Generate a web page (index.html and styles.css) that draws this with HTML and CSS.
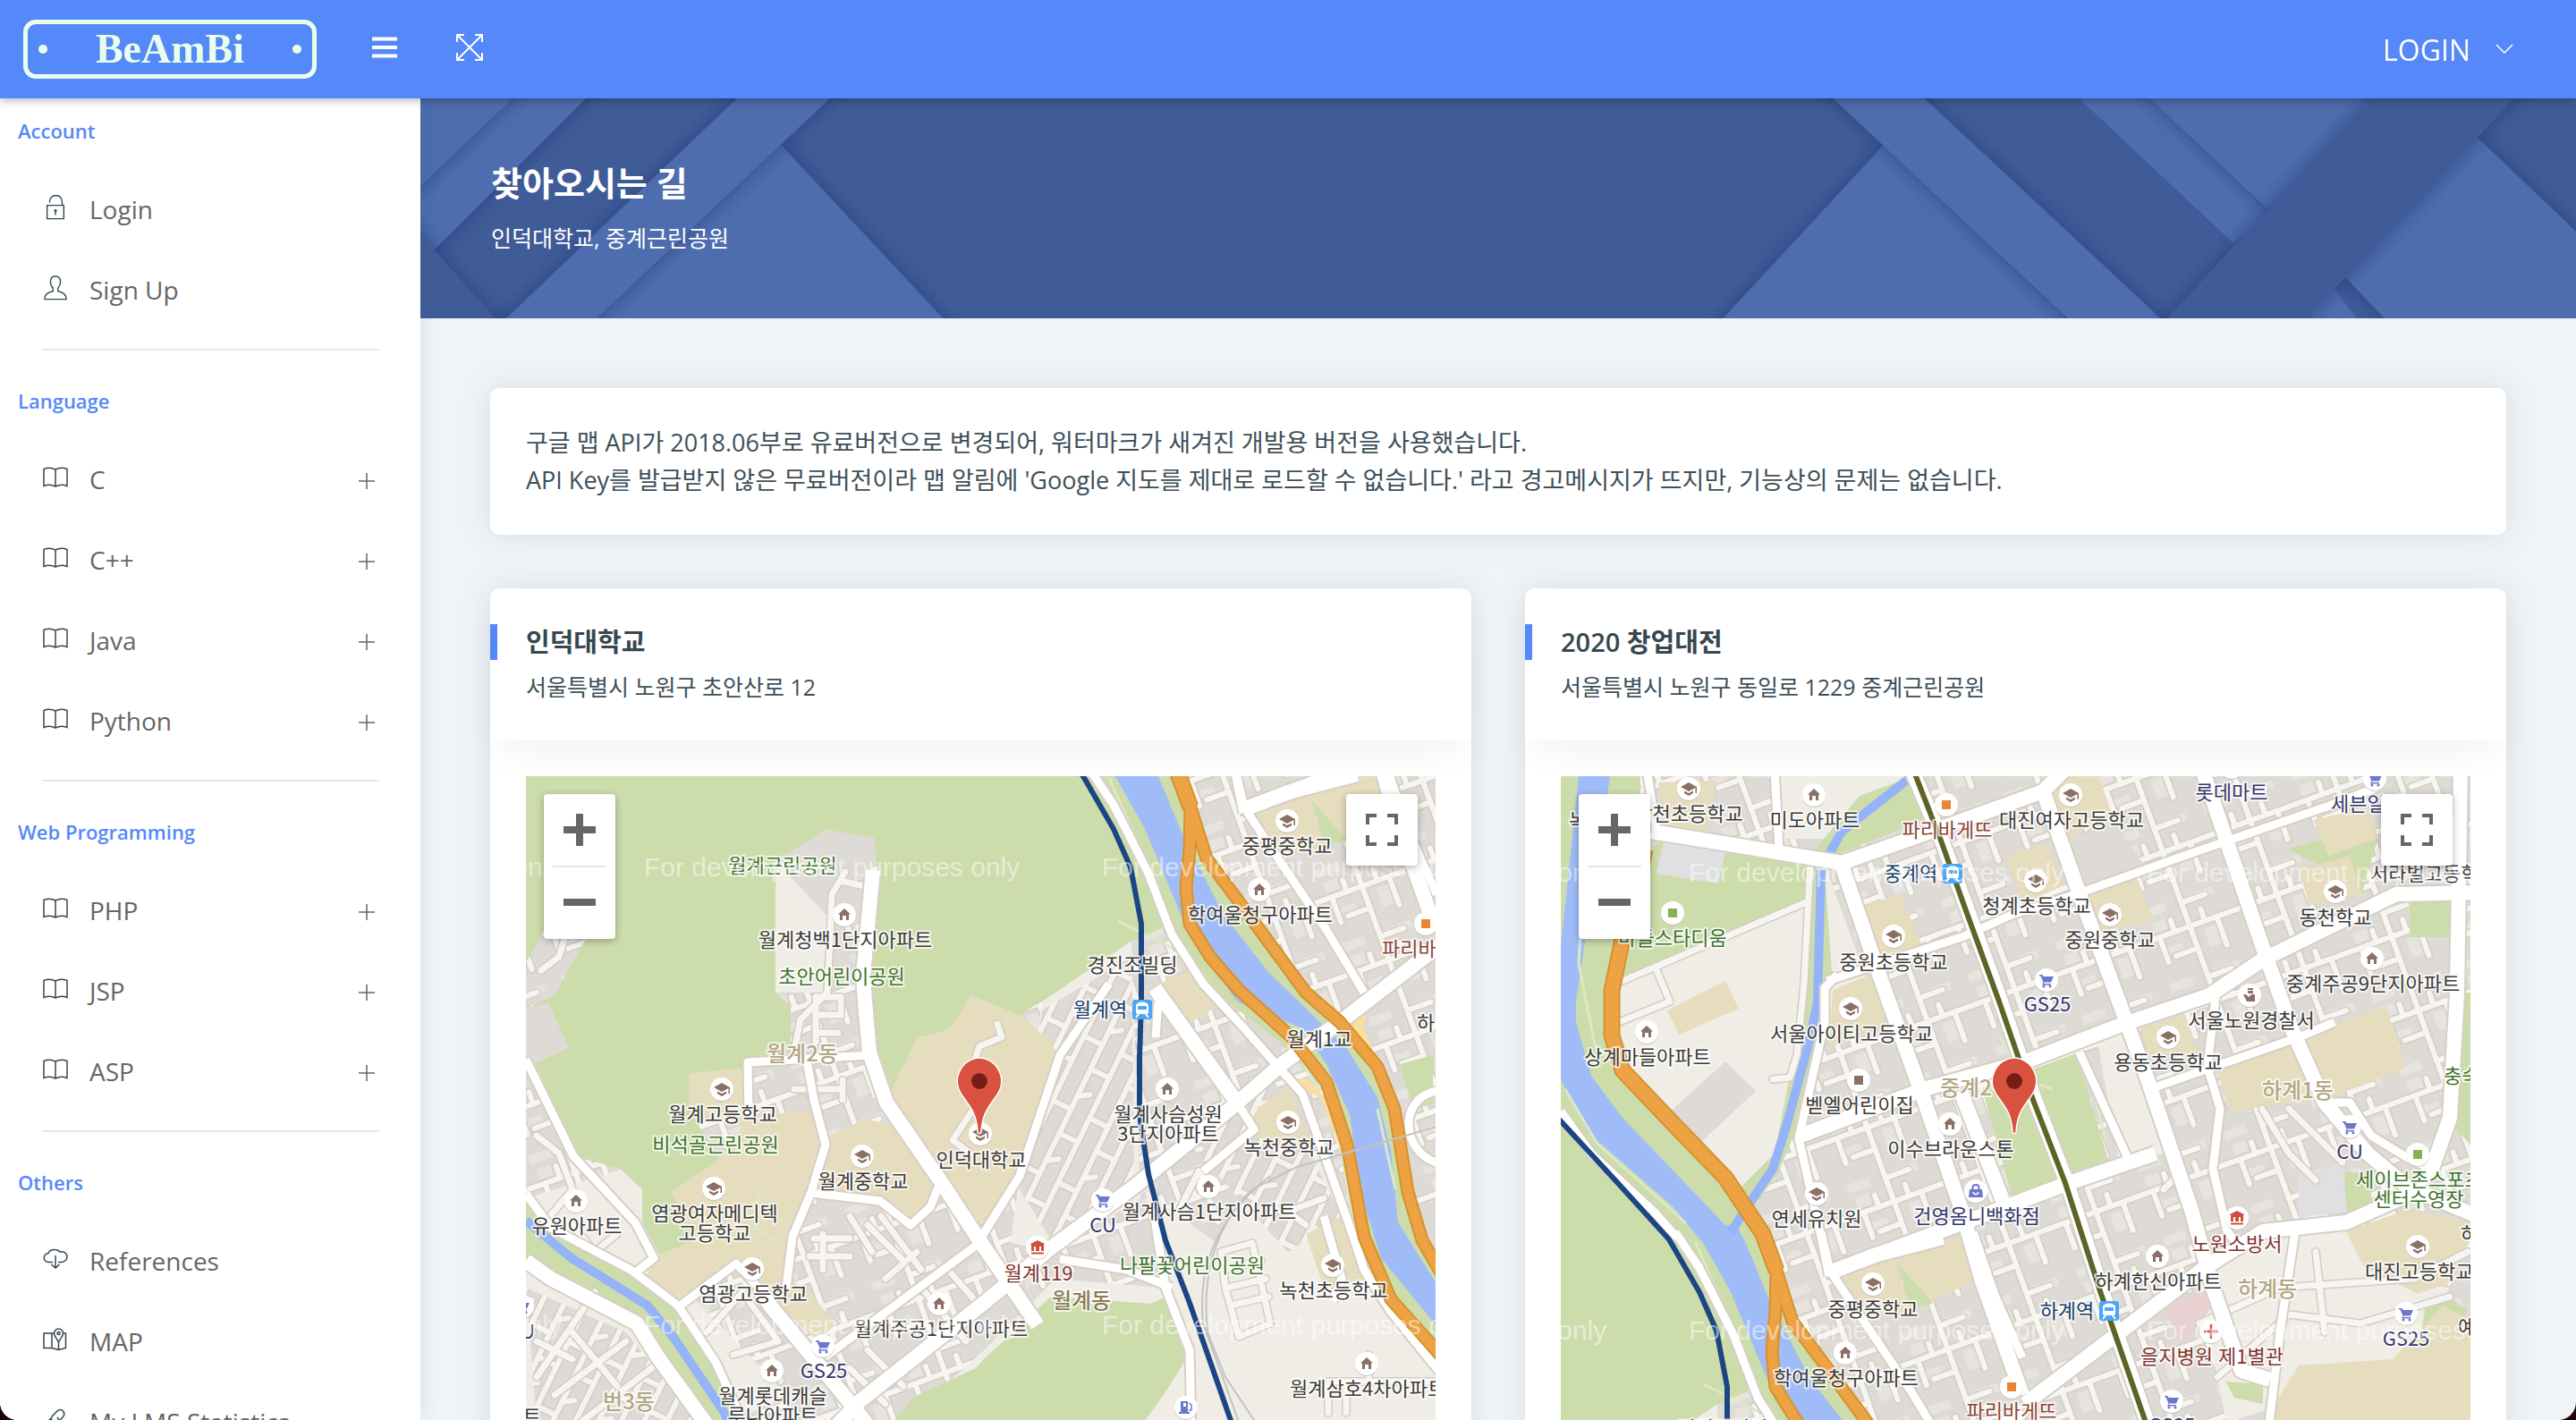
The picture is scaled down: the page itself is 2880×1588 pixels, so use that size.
FILE: index.html
```html
<!DOCTYPE html>
<html lang="ko">
<head>
<meta charset="utf-8">
<meta name="viewport" content="width=device-width, initial-scale=1">
<title>BeAmBi - 찾아오시는 길</title>
<link rel="stylesheet" href="styles.css">
</head>
<body>

<!-- shared symbols -->
<svg class="defs" aria-hidden="true">
  <defs>
    <symbol id="i-book" viewBox="0 0 28 24"><path d="M1 2.500C5 1 10 1 14 3c4-2 9-2 13-.5v19C23 20 18 20 14 22c-4-2-9-2-13-.5zM14 3v19"/></symbol>
    <symbol id="i-lock" viewBox="0 0 28 30"><path d="M4 12.500h20v16H4zM22 12V8a7 7 0 0 0-15 0v1"/><path d="M14 19v5"/><circle cx="14" cy="19" r="1"/></symbol>
    <symbol id="i-user" viewBox="0 0 28 30"><path d="M14 1c-4 0-6 3-6 6.500 0 3 1 5.500 3 7.500v4c-6 1-10 4-10 9.500h26c0-5.500-4-8.500-10-9.500v-4c2-2 3-4.500 3-7.500C20 4 18 1 14 1z"/></symbol>
    <symbol id="i-cloud" viewBox="0 0 28 24"><path d="M11 15.500H6.500a5 5 0 0 1-.5-10c1-2.500 4-4 7-4s5 1.200 6 2.500c5-1 8 2 8 5.500s-3 6-6.500 6H17M14 8v14M9.500 18l4.500 4 4.500-4"/></symbol>
    <symbol id="i-map" viewBox="0 0 28 26"><path d="M12.500 6H1v16.500h9V6M10 22.500l7.500 2 8-2V6H22M17.500 16v8.500M17.500 16c-2-4-5-6.500-5-10a5 5 0 0 1 10 0c0 3.500-3 6-5 10z"/><circle cx="17.500" cy="6" r="1.500"/></symbol>
    <symbol id="i-link" viewBox="0 0 28 28"><path d="M11 16c-2-2-2-5 0-7l5-5c2-2 5-2 6.500 0s1.500 5-.5 7l-4 4M16 11c2 2 2 5 0 7l-5 5c-2 2-5 2-6.500 0s-1.500-5 .5-7l4-4"/></symbol>
    <symbol id="i-plus" viewBox="0 0 18 18"><path d="M9 0v18M0 9h18"/></symbol>

    <g id="dot"><circle r="13" cy="1" fill="#b9b2aa" opacity=".7"/><circle r="13" fill="#fff"/></g>
    <g id="p-cap"><use href="#dot"/><path d="M-9-2L0-7l9 5v7H7.500v-6L0 3z" fill="#8a7065"/><path d="M-5 2.500L0 5l5-2.500V5L0 8l-5-3z" fill="#8a7065"/></g>
    <g id="p-home"><use href="#dot"/><path d="M0-7l7 6.500H5V6H2V1h-4v5h-3v-6.500h-2z" fill="#8a7065"/></g>
    <g id="p-cart"><use href="#dot"/><path d="M-8-6h3.500l1 2H8L5 2.500h-7.500L-3 4H5v1.500h-10l1.500-3-3-7H-8z" fill="#6b78c8"/><circle cx="-3" cy="7" r="1.500" fill="#6b78c8"/><circle cx="4" cy="7" r="1.500" fill="#6b78c8"/></g>
    <g id="p-train"><rect x="-11" y="-11" width="22" height="22" rx="3" fill="#4ba6f7"/><path d="M-7-4c0-6 14-6 14 0v7c0 1-1 2-2 2H-5c-1 0-2-1-2-2z" fill="#fff"/><path d="M-5-4H5v4H-5z" fill="#4ba6f7"/><path d="M-4 5l-3 4M4 5l3 4" stroke="#fff" stroke-width="2"/></g>
    <g id="p-food"><use href="#dot"/><path d="M-5-5H5V5H-5z" fill="#e88536"/></g>
    <g id="p-sport"><use href="#dot"/><path d="M-5-5H5V5H-5z" fill="#86b250"/></g>
    <g id="p-kids"><use href="#dot"/><path d="M-5-5H5V5H-5z" fill="#8a7065"/></g>
    <g id="p-fire"><use href="#dot"/><path d="M0-8l9 4.500H7V4H4V-1H2v5h-4v-5h-2v5h-3v-7.500h-2zM-7 5.500H7v2H-7z" fill="#cf4f3f"/></g>
    <g id="p-police"><use href="#dot"/><path d="M-2-8h6v2h-6zM-2-5h6v3h-6zM-7-1h3l3 3 3-3h4v8H-3z" fill="#8a7065"/></g>
    <g id="p-hosp"><use href="#dot"/><path d="M0-8V8M-8 0H8" stroke="#d7503f" stroke-width="2.500"/></g>
    <g id="p-bag"><use href="#dot"/><path d="M-7-2H7l1 9H-8z" fill="#6b78c8"/><path d="M-3.500-1v-3c0-4 7-4 7 0v3" fill="none" stroke="#6b78c8" stroke-width="2"/><path d="M-3 1c1 3.500 5 3.500 6 0" fill="none" stroke="#fff" stroke-width="1.500"/></g>
    <g id="p-gas"><use href="#dot"/><path d="M-6-7h8V5h2v2H-8V5h2z" fill="#6b78c8"/><path d="M-3-5h3v4h-3z" fill="#fff"/><path d="M3-5l3 2v6H3" fill="none" stroke="#6b78c8" stroke-width="1.500"/></g>
    <g id="pin"><path d="M-2 0C-3-20-10-28-18-39C-34-60-18-83 0-83S34-60 18-39C10-28 3-20 2 0C2 2-2 2-2 0z" fill="#d9513f" stroke="#fff" stroke-width="1.500"/><circle cy="-57" r="9" fill="#761d17"/></g>

    <pattern id="blocks" width="104" height="88" patternUnits="userSpaceOnUse" patternTransform="rotate(-20)">
      <path fill="#dedad5" d="M0 0h104v88H0z"/>
      <path fill="#e7e4df" d="M8 9h26v10H8zM12 26h16v12H12zM60 10h30v9H60zM66 52h14v22H66zM14 58h24v8H14z"/>
      <g fill="none" stroke-linecap="round" stroke="#d3ccc2" stroke-width="9"><path d="M0 44h104M52 0v88M16 44v30M34 44V30M52 70H26M52 16h28M84 44v34M70 44V30"/></g>
      <g fill="none" stroke-linecap="round" stroke="#f7f5f1" stroke-width="6"><path d="M0 44h104M52 0v88M16 44v30M34 44V30M52 70H26M52 16h28M84 44v34M70 44V30"/></g>
    </pattern>
    <pattern id="alleys" width="80" height="46" patternUnits="userSpaceOnUse" patternTransform="rotate(-64)">
      <path fill="#dedad5" d="M0 0h80v46H0z"/>
      <g fill="none" stroke-linecap="round" stroke="#d3ccc2" stroke-width="9"><path d="M0 10h80M0 33h80M20 10v23M50 33v13M50 0v10M66 10l8 12"/></g>
      <g fill="none" stroke-linecap="round" stroke="#f5f3ee" stroke-width="6"><path d="M0 10h80M0 33h80M20 10v23M50 33v13M50 0v10M66 10l8 12"/></g>
    </pattern>

    <g id="wide">
      <path d="M976 973L965 1090 967 1120 972 1177 991 1233 1053 1323 1095 1387 1160 1482"/>
      <path d="M930 1600L961 1567 1100 1457 1173 1397 1268 1327 1379 1237 1433 1190 1502 1140 1606 1060"/>
      <path d="M588 1410L616 1430 712 1480 735 1517 795 1600"/>
      <path d="M848 1440L861 1460 949 1567 975 1600"/>
      <path d="M1291 1105L1383 1233"/>
      <path d="M1391 905L1440 886 1517 866"/>
      <g transform="translate(-656 -518)">
        <path d="M1847 930L1940 945 2060 965 2174 925 2285 885 2310 860"/>
        <path d="M2060 967L2102 1090 2151 1227 2194 1353 2217 1433 2262 1560"/>
        <path d="M2286 887L2326 1000 2370 1120 2403 1210 2451 1353 2475 1440 2507 1533 2539 1543"/>
        <path d="M2463 860L2531 1060 2563 1150 2600 1233 2648 1290 2692 1327 2775 1362"/>
        <path d="M2014 1270L2155 1217 2266 1187 2370 1147 2471 1113 2531 1073 2680 1000 2770 998"/>
        <path d="M2046 1423L2197 1367 2314 1323 2411 1290"/>
        <path d="M2265 1570L2467 1417 2531 1377 2624 1367 2692 1337 2720 1307 2740 1250 2748 1110 2752 860"/>
        <path d="M2138 860L2172 940 2199 1013 2238 1120 2276 1230 2312 1323 2352 1447 2405 1600"/>
        <path d="M2194 1223L2243 1350"/>
      </g>
    </g>
    <g id="mid">
      <path d="M588 1185L641 1293 710 1367 731 1407 708 1425"/>
      <path d="M588 1335L616 1373 705 1420 758 1460 800 1523 835 1600"/>
      <path d="M758 1462L823 1413 848 1440"/>
      <path d="M837 1247L836 1188 972 1180M902 1186L910 1230 923 1280 907 1333 886 1383 879 1440"/>
      <path d="M907 1334L984 1343 1018 1370 1040 1350 1050 1325M923 1517L1095 1390M1095 1387L1140 1315 1155 1270 1185 1180 1240 1100"/>
      <path d="M1218 860L1245 900 1284 977 1310 1045 1345 1100 1391 1150 1429 1193 1456 1223 1479 1287 1513 1383 1525 1420 1555 1467 1610 1535"/>
      <path d="M1383 1233L1402 1263 1345 1310M1295 1120L1292 1160M1289 1350L1303 1440 1330 1510 1332 1600M1185 1408L1260 1420 1310 1440"/>
      <path d="M1381 860L1391 903 1429 960 1483 1040 1525 1110M1551 860L1575 930 1606 1000M1480 1360L1500 1430 1490 1455"/>
      <path d="M1606 1300C1570 1290 1560 1230 1606 1220"/>
      <g transform="translate(-656 -518)">
        <path d="M2044 1097L2197 1047 2250 1023 2322 1000 2443 957 2608 900 2660 880"/>
        <path d="M2407 1217L2571 1160 2611 1143M2608 1233L2628 1233 2652 1270 2696 1297 2720 1307"/>
        <path d="M2567 1377L2551 1483 2537 1600M2479 1107L2469 1193 2483 1240 2475 1307 2491 1377 2510 1400"/>
        <path d="M2055 1090L2041 1105 2041 1143 2012 1273 2037 1383 2046 1427M2326 1177L2379 1293"/>
        <path d="M1842 860L1853 930M1985 860L1990 950M1746 1243L1780 1290 1850 1355 1876 1384"/>
      </g>
    </g>
    <g id="small">
      <path d="M945 975L930 1000 928 1050 925 1110 895 1140 888 1175M940 985L970 992M912 1115L940 1115 940 1135 912 1135zM912 1120V1165M912 1155h25"/>
      <path d="M888 1218h54M942 1208v22M1115 1145L1120 1160 1095 1170 1080 1215 1095 1230 1065 1275 1085 1290"/>
      <path d="M910 1385h40M905 1405h45M920 1380v40M950 1360L975 1400M970 1370L1010 1410M985 1360L1030 1420M990 1430L1025 1400"/>
      <path d="M605 1085L625 1070 640 1020M600 1540L665 1445M620 1560L700 1500M650 1590L735 1525M640 1490L690 1550M600 1500L640 1520"/>
      <path d="M790 1490L830 1445 870 1500 820 1515M640 1370L665 1400 690 1380M600 1270L625 1290 640 1330 615 1360"/>
      <path d="M1030 1440L1080 1500M1060 1420L1095 1460M950 1530L990 1570M970 1510L1010 1550"/>
      <path d="M1370 1440L1365 1400 1400 1390 1420 1480 1385 1495zM1370 1420L1410 1410M1372 1440L1415 1430M1376 1460L1418 1450"/>
      <path d="M1485 1580V1545h120M1530 1545v-30M1460 1370L1440 1355 1480 1340M1320 1350L1340 1310 1350 1325M1505 1580v-35"/>
      <g transform="translate(-656 -518)">
        <path d="M1815 1097L2018 1010M1853 1085L1868 1120 1811 1143M2025 963L2018 1100 2010 1180 2002 1205 1983 1207"/>
        <path d="M2420 1330L2440 1310 2460 1380M2530 1240L2560 1290 2590 1320M2560 1240L2620 1300M2460 1480L2550 1440 2700 1430 2760 1400M2480 1540L2560 1470 2640 1480 2740 1450M2590 1400L2600 1490"/>
      </g>
    </g>
    <g id="express">
      <path d="M1316 868L1331 903 1330 950 1326 993 1330 1033 1353 1070 1385 1107 1444 1160 1483 1210 1506 1280 1525 1383 1555 1453 1612 1517"/>
      <path d="M1331 903L1349 960 1379 1000 1421 1057 1460 1110 1498 1143 1540 1193 1559 1240 1574 1333 1590 1387 1612 1425"/>
    </g>
    <path id="trunk" d="M1184 432L1174 482 1159 532 1147 590 1147 640 1159 679 1216 739 1274 799 1316 862 1331 903"/>

    <!-- base cartography; both maps are windows on the same ground -->
    <g id="world">
      <path fill="url(#blocks)" d="M560 330h1580v1320H560z"/>
      <g class="land">
        <path d="M588 1340L720 1300 745 1420 880 1560 800 1600H588zM1000 1600L1100 1510 1180 1430 1300 1440 1280 1330 1360 1390 1400 1320 1480 1290 1520 1400 1606 1520V1600zM867 963L930 1020 925 1110 867 1110zM1165 1120L1265 1052 1275 1340 1180 1400 1130 1390z"/>
        <g transform="translate(-656 -518)"><path d="M1810 1100L2018 1010 2044 975 2090 1100 2020 1190 1985 1290 1960 1345 1800 1190zM2345 1160L2385 1140 2420 1290 2370 1300zM2490 1390L2570 1375 2640 1375 2660 1430 2740 1440 2670 1540 2490 1590 2460 1440zM1985 868h150l-60 70-90 0z"/></g>
      </g>
      <path fill="url(#alleys)" d="M1165 1130L1265 1070 1268 1320 1180 1395 1140 1330zM588 1440L700 1490 780 1588H600zM1420 1200L1500 1360 1440 1400 1330 1280z"/>
      <g class="green">
        <path d="M588 740H1218L1299 1023 1299 1038 1264 1053 1165 1120 1140 1135 1085 1113 1064 1148 1049 1155 1026 1160 995 1223 978 1180 970 1100 982 980 977 937 924 928 867 963V1110L884 1125V1177L836 1182 830 1200 770 1200V1240L804 1297 760 1360 777 1387 737 1403 718 1367V1330L693 1307 649 1295 588 1170V1128L620 1113 655 1050 609 1040 588 1077z"/>
        <path d="M1100 1520L1175 1450 1287 1458 1303 1450 1326 1520 1303 1557 1272 1600H990L1022 1562 1091 1530z"/>
        <path d="M588 1335L616 1375 705 1420 758 1460 800 1523 835 1600H790L735 1517 712 1480 616 1430 588 1410z"/>
        <path d="M1225 868L1310 1050 1360 1110 1430 1165 1490 1230 1510 1350 1530 1430 1606 1505V1410L1570 1330 1555 1230 1500 1150 1450 1100 1350 975 1316 868z"/>
        <path d="M1464 884L1490 877 1506 940 1480 945zM1565 1190L1602 1180V1235L1580 1240z"/>
        <g transform="translate(-656 -518)">
          <path d="M1746 868H1835L1830 1000 1812 1060 1805 1190 1870 1260 1976 1386H1880L1746 1240zM1847 950L1860 938 2035 972 2018 1010 1815 1097zM2217 1217L2322 1178 2358 1297 2251 1340z"/>
          <path d="M2140 868L2155 915 2040 962 2050 1100 2010 1260 1990 1310 1940 1380 1925 1350 1985 1290 2018 1120 2030 950 2080 890z"/>
          <path d="M2559 950L2591 940 2660 935 2642 998 2600 970zM2695 998L2742 1000 2741 1048H2695zM2489 1545L2531 1548V1570L2499 1563zM2712 1463L2736 1450 2760 1465 2700 1550zM2622 1310L2652 1313V1347L2624 1355zM2750 1110H2780V1300L2745 1260z"/>
        </g>
      </g>
      <path class="urban" d="M867 963L924 928 977 937 968 1030 930 1030zM588 1128L613 1121 636 1172 597 1190 588 1180z"/>
      <g class="school">
        <path d="M770 1200L830 1195V1252L905 1240 916 1283 900 1333 878 1430 900 1440 935 1480 915 1500 861 1450 823 1413 758 1453 722 1427 737 1403 777 1387 750 1333 804 1297 830 1260 770 1240z"/>
        <path d="M925 1272L967 1251 1003 1260 1050 1330 1018 1368 984 1340 910 1330zM1085 1113L1140 1135 1175 1165 1187 1190 1138 1317 1098 1370 1053 1320 995 1225 1026 1160 1049 1155 1064 1148z"/>
        <path d="M1398 910L1462 885 1482 950 1430 955zM1297 1100L1340 1080 1370 1120 1320 1150zM1405 1240L1440 1215 1470 1290 1400 1270zM1460 1380L1500 1360 1530 1430 1480 1440z"/>
        <g transform="translate(-656 -518)">
          <path d="M1855 875L1920 873 1908 930 1863 923zM1865 1130L1930 1097 1945 1128 1878 1157zM2083 1013L2125 1000 2150 1057 2098 1070zM2050 1107L2092 1090 2111 1147 2046 1172zM2288 887L2302 868H2348L2360 907 2308 945zM2243 957L2290 943 2308 990 2262 1012zM2326 1000L2391 983 2409 1030 2342 1043z"/>
          <path d="M2587 917L2648 903 2660 937 2604 957zM2571 973L2628 957 2642 1000 2583 1013zM2479 1197L2563 1163 2590 1230 2495 1242zM2571 1160L2668 1125 2692 1193 2600 1230zM2393 1150L2443 1133 2459 1177 2403 1180zM2624 1377L2692 1353 2770 1367 2744 1433 2704 1447 2644 1417zM2571 1527L2676 1520 2732 1460 2770 1480V1600H2546V1567zM2118 1408L2146 1395 2200 1382 2213 1430 2160 1455z"/>
        </g>
      </g>
      <g transform="translate(-656 -518)">
        <path class="urban" d="M1930 1187L1964 1220 1903 1277 1868 1243zM2308 945L2365 920 2400 970 2325 995z"/>
        <path fill="#e0e0e2" d="M1861 942L1930 953 1922 988 1853 977zM2571 1313L2620 1300 2624 1355 2571 1362z"/>
        <path fill="#e8d1d0" d="M2421 1463L2467 1443 2473 1463 2440 1505z"/>
      </g>
      <g class="water">
        <path d="M1247 868L1280 927 1326 1037 1383 1120 1456 1150 1483 1190 1509 1247 1521 1333 1544 1407 1612 1490V1445L1563 1367 1555 1287 1540 1227 1506 1173 1452 1120 1418 1087 1368 1023 1322 933 1295 868z"/>
        <path d="M1110 350H1145L1107 602V625L1124 685 1159 732 1274 852 1287 852 1295 870H1247L1216 832 1121 749 1090 689V540z"/>
      </g>
      <path class="creek" d="M588 1365L639 1407 724 1460 754 1497 808 1577 820 1600"/>
      <path class="creek" d="M1480 352L1438 385 1404 412 1390 437M1381 455L1377 602 1369 642 1342 742 1327 789 1300 829 1280 860"/>
      <path class="trail" d="M1240 870L1275 950 1300 1030M1095 700L1130 760 1230 850M1120 400L1110 560 1128 650 1200 730M1540 1240L1560 1330M1450 1175L1495 1260 1515 1380M760 1290L800 1290M830 1270L810 1290M850 1330L840 1370 870 1390M1580 640L1610 690 1640 700M1680 680L1700 760M1250 1030L1310 1060"/>
      <path class="ramp" d="M1500 1130L1512 1128 1530 1112 1524 1150 1540 1185 1520 1170zM1430 1195L1440 1165 1460 1185zM1440 1205L1462 1207 1490 1240 1500 1290 1478 1230z"/>
      <g class="line round"><use href="#small" class="case-s"/><use href="#small" class="fill-s"/></g>
      <g class="line"><use href="#mid" class="case-m"/><use href="#wide" class="case-w"/><use href="#mid" class="fill-m"/><use href="#wide" class="fill-w"/></g>
      <g class="line"><use href="#express" class="case-x"/><use href="#trunk" class="case-t"/><use href="#express" class="fill-x"/><use href="#trunk" class="fill-t"/></g>
      <path class="rail" d="M1606 1260L1520 1285 1450 1305 1400 1330C1350 1380 1345 1440 1350 1490L1370 1540 1410 1600M1420 1315C1350 1370 1340 1430 1345 1480L1385 1590"/>
      <path class="line1" d="M1080 725L1151 802 1211 868 1245 927 1264 970 1276 1033 1276 1120 1274 1183 1274 1247 1284 1313 1303 1387 1330 1457 1380 1600"/>
      <path class="line7" d="M1483 340L1515 422 1541 495 1580 602 1618 712 1654 805 1694 929 1750 1090"/>
    </g>
  </defs>
</svg>

<div class="app">
  <header class="topbar">
    <a class="logo" href="#"><i class="peg"></i><span>BeAmBi</span><i class="peg"></i></a>
    <button class="tool" type="button" aria-label="메뉴"><svg width="28" height="24" viewBox="0 0 28 24"><path d="M0 2.500h28M0 12h28M0 21.500h28" stroke="#fff" stroke-width="4"/></svg></button>
    <button class="tool" type="button" aria-label="전체 화면"><svg width="30" height="30" viewBox="0 0 30 30"><path d="M2 2l26 26M28 2L2 28M1 9V1h8M21 1h8v8M29 21v8h-8M9 29H1v-8" fill="none" stroke="#fff" stroke-width="2"/></svg></button>
    <button class="login" type="button">LOGIN<svg width="20" height="12" viewBox="0 0 20 12"><path d="M1 1l9 9 9-9" fill="none" stroke="#fff" stroke-width="1.500"/></svg></button>
  </header>

  <div class="shell">
    <nav class="sidebar">
      <h2>Account</h2>
      <a href="#"><svg><use href="#i-lock"/></svg><span>Login</span></a>
      <a href="#"><svg><use href="#i-user"/></svg><span>Sign Up</span></a>
      <hr>
      <h2>Language</h2>
      <a href="#"><svg><use href="#i-book"/></svg><span>C</span><svg class="plus"><use href="#i-plus"/></svg></a>
      <a href="#"><svg><use href="#i-book"/></svg><span>C++</span><svg class="plus"><use href="#i-plus"/></svg></a>
      <a href="#"><svg><use href="#i-book"/></svg><span>Java</span><svg class="plus"><use href="#i-plus"/></svg></a>
      <a href="#"><svg><use href="#i-book"/></svg><span>Python</span><svg class="plus"><use href="#i-plus"/></svg></a>
      <hr>
      <h2>Web Programming</h2>
      <a href="#"><svg><use href="#i-book"/></svg><span>PHP</span><svg class="plus"><use href="#i-plus"/></svg></a>
      <a href="#"><svg><use href="#i-book"/></svg><span>JSP</span><svg class="plus"><use href="#i-plus"/></svg></a>
      <a href="#"><svg><use href="#i-book"/></svg><span>ASP</span><svg class="plus"><use href="#i-plus"/></svg></a>
      <hr>
      <h2>Others</h2>
      <a href="#"><svg><use href="#i-cloud"/></svg><span>References</span></a>
      <a href="#"><svg><use href="#i-map"/></svg><span>MAP</span></a>
      <a href="#"><svg><use href="#i-link"/></svg><span>My LMS Statistics</span></a>
    </nav>

    <main class="content">
      <section class="banner">
        <svg class="banner-art" viewBox="0 0 2410 246" preserveAspectRatio="xMidYMid slice" aria-hidden="true">
          <defs><filter id="soft" x="-20%" y="-20%" width="140%" height="140%"><feDropShadow dx="0" dy="0" stdDeviation="9" flood-color="#1d2f6b" flood-opacity=".6"/></filter></defs>
          <path fill="#3f5c98" d="M0 0h2410v246H0z"/>
          <g filter="url(#soft)" fill="#4e6dae"><path d="M100-20H205L-20 205V100z"/></g>
          <g filter="url(#soft)" fill="#4e6dae"><path d="M-20-20H124L-20 117z"/></g>
          <g filter="url(#soft)" fill="#3f5c98"><path d="M-20 130L102 266H-20z"/></g>
          <g filter="url(#soft)" fill="#4e6dae"><path d="M403 52L603 266H176z"/></g>
          <g filter="url(#soft)" fill="#4e6dae"><path d="M375-20H479L176 266H75z"/></g>
          <g filter="url(#soft)" fill="#4e6dae"><path d="M1636 52L1862 266H1438z"/></g>
          <g filter="url(#soft)" fill="#4e6dae"><path d="M1558-20H1660L1967 266H1863z"/></g>
          <path fill="#4e6dae" d="M1833-20H1930L2090 110 2027 162z"/>
          <g filter="url(#soft)" fill="#4e6dae"><path d="M1912-20H2200L2069 127z"/></g>
          <path fill="#4e6dae" d="M2136 208L2180 266H2080z"/>
          <g filter="url(#soft)" fill="#4e6dae"><path d="M2298 42L2430 168V266H2215L2150 198z"/></g>
          <g filter="url(#soft)" fill="#3f5c98"><path d="M2200-20H2360L2090 266H1934z"/></g>
        </svg>
        <h1>찾아오시는 길</h1>
        <p>인덕대학교, 중계근린공원</p>
      </section>

      <div class="page">
        <section class="card notice">
          <p>구글 맵 API가 2018.06부로 유료버전으로 변경되어, 워터마크가 새겨진 개발용 버전을 사용했습니다.</p>
          <p>API Key를 발급받지 않은 무료버전이라 맵 알림에 'Google 지도를 제대로 로드할 수 없습니다.' 라고 경고메시지가 뜨지만, 기능상의 문제는 없습니다.</p>
        </section>

        <div class="columns">
          <section class="card">
            <header class="card-head"><h3>인덕대학교</h3><p>서울특별시 노원구 초안산로 12</p></header>
            <div class="map">
              <svg class="ground" viewBox="588 868 1018 800" preserveAspectRatio="xMinYMin slice">
                <use href="#world"/>
                <g>
                  <use href="#p-home" x="944" y="1023"/><use href="#p-cap" x="1439" y="918"/><use href="#p-home" x="1408" y="995"/><use href="#p-food" x="1594" y="1033"/>
                  <use href="#p-cap" x="807" y="1218"/><use href="#p-cap" x="798" y="1329"/><use href="#p-cap" x="964" y="1293"/><use href="#p-cap" x="1096" y="1268"/>
                  <use href="#p-home" x="644" y="1343"/><use href="#p-cap" x="841" y="1419"/><use href="#p-home" x="1050" y="1458"/><use href="#p-cart" x="920" y="1505"/>
                  <use href="#p-home" x="863" y="1533"/><use href="#p-cart" x="584" y="1461"/><use href="#p-train" x="1277" y="1129"/><use href="#p-home" x="1305" y="1218"/>
                  <use href="#p-cap" x="1440" y="1255"/><use href="#p-home" x="1351" y="1327"/><use href="#p-cart" x="1233" y="1342"/><use href="#p-fire" x="1160" y="1395"/>
                  <use href="#p-cap" x="1490" y="1415"/><use href="#p-home" x="1528" y="1525"/><use href="#p-gas" x="1326" y="1574"/>
                </g>
                <g class="labels">
                  <text class="park" x="875" y="976">월계근린공원</text><text x="945" y="1059">월계청백1단지아파트</text><text class="park" x="941" y="1100">초안어린이공원</text>
                  <text x="1439" y="954">중평중학교</text><text x="1409" y="1031">학여울청구아파트</text><text class="food from" x="1545" y="1069">파리바게뜨</text><text x="1266" y="1087">경진조빌딩</text>
                  <text class="dong" x="897" y="1187">월계2동</text><text x="808" y="1254">월계고등학교</text><text class="park" x="800" y="1288">비석골근린공원</text>
                  <text x="799" y="1365">염광여자메디텍</text><text x="799" y="1387">고등학교</text><text x="965" y="1329">월계중학교</text><text x="1097" y="1305">인덕대학교</text>
                  <text x="645" y="1379">유원아파트</text><text x="842" y="1455">염광고등학교</text><text x="1052" y="1494">월계주공1단지아파트</text><text class="shop" x="921" y="1541">GS25</text>
                  <text x="864" y="1569">월계롯데캐슬</text><text x="864" y="1591">루나아파트</text><text class="dong" x="703" y="1576">번3동</text><text class="shop" x="583" y="1497">CU</text><text class="to" x="605" y="1592">아파트</text>
                  <text class="metro" x="1230" y="1137">월계역</text><text x="1475" y="1170">월계1교</text><text class="from" x="1584" y="1152">하계</text>
                  <text x="1306" y="1254">월계사슴성원</text><text x="1306" y="1276">3단지아파트</text><text x="1441" y="1291">녹천중학교</text><text x="1352" y="1363">월계사슴1단지아파트</text>
                  <text class="shop" x="1233" y="1378">CU</text><text class="civic" x="1161" y="1432">월계119</text><text class="dong dark" x="1209" y="1463">월계동</text><text class="park" x="1333" y="1423">나팔꽃어린이공원</text>
                  <text x="1491" y="1451">녹천초등학교</text><text class="from" x="1442" y="1561">월계삼호4차아파트</text>
                </g>
                <g class="mark">
                  <text x="208" y="980">For development purposes only</text><text x="720" y="980">For development purposes only</text><text x="1232" y="980">For development purposes only</text>
                  <text x="208" y="1492">For development purposes only</text><text x="720" y="1492">For development purposes only</text><text x="1232" y="1492">For development purposes only</text>
                </g>
                <use href="#pin" x="1095" y="1266"/>
              </svg>
              <div class="zoom"><button type="button" aria-label="확대"><svg viewBox="0 0 36 36"><path d="M0 14h14V0h8v14h14v8H22v14h-8V22H0z"/></svg></button><button type="button" aria-label="축소"><svg viewBox="0 0 36 36"><path d="M0 14h36v8H0z"/></svg></button></div>
              <button class="full" type="button" aria-label="전체 화면 보기"><svg viewBox="0 0 36 36"><path d="M0 0h12v4H4v8H0zM24 0h12v12h-4V4h-8zM0 24h4v8h8v4H0zM32 24h4v12H24v-4h8z"/></svg></button>
            </div>
          </section>

          <section class="card">
            <header class="card-head"><h3>2020 창업대전</h3><p>서울특별시 노원구 동일로 1229 중계근린공원</p></header>
            <div class="map">
              <svg class="ground" viewBox="1746 868 1018 800" preserveAspectRatio="xMinYMin slice">
                <g transform="translate(656 518)"><use href="#world"/></g>
                <g>
                  <use href="#p-cap" x="1889" y="882"/><use href="#p-home" x="2029" y="889"/><use href="#p-food" x="2177" y="900"/><use href="#p-cap" x="2316" y="889"/><use href="#dot" x="2496" y="858"/>
                  <use href="#p-cart" x="2656" y="871"/><use href="#p-train" x="2184" y="977"/><use href="#p-cap" x="2277" y="985"/><use href="#p-cap" x="2360" y="1023"/><use href="#p-cap" x="2612" y="997"/>
                  <use href="#p-sport" x="1871" y="1021"/><use href="#p-cap" x="2118" y="1047"/><use href="#p-cart" x="2289" y="1096"/><use href="#p-home" x="2653" y="1072"/><use href="#p-police" x="2516" y="1113"/>
                  <use href="#p-cap" x="2070" y="1128"/><use href="#p-home" x="1842" y="1154"/><use href="#p-kids" x="2079" y="1208"/><use href="#p-home" x="2181" y="1257"/><use href="#p-bag" x="2210" y="1332"/>
                  <use href="#p-cap" x="2032" y="1335"/><use href="#p-cap" x="2095" y="1436"/><use href="#p-home" x="2064" y="1513"/><use href="#p-food" x="2250" y="1551"/><use href="#p-train" x="2359" y="1466"/>
                  <use href="#p-home" x="2413" y="1405"/><use href="#p-cap" x="2425" y="1160"/><use href="#p-cart" x="2628" y="1260"/><use href="#p-sport" x="2704" y="1291"/><use href="#p-fire" x="2502" y="1362"/>
                  <use href="#p-cap" x="2704" y="1394"/><use href="#p-hosp" x="2473" y="1489"/><use href="#p-cart" x="2691" y="1469"/><use href="#p-cart" x="2429" y="1567"/>
                </g>
                <g class="labels">
                  <text class="from" x="1755" y="926">녹천</text><text x="1889" y="918">상천초등학교</text><text x="2030" y="925">미도아파트</text><text class="food" x="2178" y="936">파리바게뜨</text><text x="2317" y="925">대진여자고등학교</text>
                  <text class="shop" x="2496" y="894">롯데마트</text><text class="shop from" x="2607" y="907">세븐일레븐</text><text class="metro" x="2137" y="985">중계역</text><text x="2278" y="1021">청계초등학교</text>
                  <text x="2360" y="1059">중원중학교</text><text x="2612" y="1034">동천학교</text><text class="from" x="2651" y="985">서라벌고등학교</text><text class="park" x="1871" y="1057">마들스타디움</text>
                  <text x="2118" y="1084">중원초등학교</text><text class="shop" x="2290" y="1131">GS25</text><text x="2654" y="1108">중계주공9단지아파트</text><text x="2518" y="1149">서울노원경찰서</text>
                  <text x="2071" y="1164">서울아이티고등학교</text><text x="1843" y="1190">상계마들아파트</text><text x="2080" y="1244">벧엘어린이집</text><text class="dong from" x="2170" y="1225">중계2·3동</text>
                  <text x="2182" y="1293">이수브라운스톤</text><text class="shop" x="2211" y="1368">건영옴니백화점</text><text x="2032" y="1371">연세유치원</text><text x="2095" y="1472">중평중학교</text>
                  <text x="2065" y="1549">학여울청구아파트</text><text class="food" x="2250" y="1586">파리바게뜨</text><text x="1927" y="1605">경진조빌딩</text><text class="metro" x="2312" y="1474">하계역</text>
                  <text x="2414" y="1441">하계한신아파트</text><text x="2425" y="1196">용동초등학교</text><text class="dong" x="2570" y="1228">하계1동</text><text class="shop" x="2628" y="1296">CU</text>
                  <text class="park from" x="2635" y="1327">세이브존스포츠</text><text class="park" x="2705" y="1349">센터수영장</text><text class="park from" x="2733" y="1211">충숙근린</text><text class="civic" x="2502" y="1399">노원소방서</text>
                  <text class="from" x="2645" y="1430">대진고등학교</text><text class="from" x="2752" y="1388">하계</text><text class="dong" x="2536" y="1450">하계동</text><text class="civic" x="2474" y="1525">을지병원 제1별관</text>
                  <text class="shop" x="2691" y="1505">GS25</text><text class="from" x="2749" y="1492">예일</text><text class="shop" x="2429" y="1602">GS25</text>
                </g>
                <g class="mark">
                  <text x="1377" y="986">For development purposes only</text><text x="1889" y="986">For development purposes only</text><text x="2401" y="986">For development purposes only</text>
                  <text x="1377" y="1498">For development purposes only</text><text x="1889" y="1498">For development purposes only</text><text x="2401" y="1498">For development purposes only</text>
                </g>
                <use href="#pin" x="2253" y="1266"/>
              </svg>
              <div class="zoom"><button type="button" aria-label="확대"><svg viewBox="0 0 36 36"><path d="M0 14h14V0h8v14h14v8H22v14h-8V22H0z"/></svg></button><button type="button" aria-label="축소"><svg viewBox="0 0 36 36"><path d="M0 14h36v8H0z"/></svg></button></div>
              <button class="full" type="button" aria-label="전체 화면 보기"><svg viewBox="0 0 36 36"><path d="M0 0h12v4H4v8H0zM24 0h12v12h-4V4h-8zM0 24h4v8h8v4H0zM32 24h4v12H24v-4h8z"/></svg></button>
            </div>
          </section>
        </div>
      </div>
    </main>
  </div>
</div>
</body>
</html>
```
FILE: styles.css
```css
* { box-sizing: border-box; }

body {
  margin: 0;
  background: #1c0408;
  font-family: "Open Sans", "Noto Sans CJK KR", sans-serif;
  font-size: 27px;
  color: #3e4f59;
}

h1, h2, h3, p { margin: 0; }
a { color: inherit; text-decoration: none; }
button { margin: 0; padding: 0; border: 0; background: none; font: inherit; color: inherit; cursor: pointer; }
svg { display: block; }

.defs { position: absolute; width: 0; height: 0; }

.app {
  display: flex;
  flex-direction: column;
  height: 100vh;
  overflow: hidden;
  border-radius: 0 0 20px 20px;
  background: #eff4f7;
}

/* top bar */
.topbar {
  position: relative;
  z-index: 2;
  flex: none;
  display: flex;
  align-items: center;
  height: 110px;
  padding: 0 70px 0 26px;
  background: #5588f8;
  box-shadow: 0 2px 10px rgba(0, 0, 0, .3);
  color: #fff;
}
.logo {
  display: flex;
  align-items: center;
  justify-content: space-between;
  width: 328px;
  height: 66px;
  padding: 0 12px;
  border: 5px solid #e9ffec;
  border-radius: 14px;
  color: #e9ffec;
  font: bold 46px/56px "Liberation Serif", serif;
}
.peg { width: 10px; height: 10px; border-radius: 50%; background: #e9ffec; }
.tool { margin: 0 0 4px 62px; }
.tool + .tool { margin-left: 66px; }
.login { display: flex; align-items: center; gap: 28px; margin-left: auto; font-size: 32px; }

/* sidebar */
.shell { flex: 1; display: flex; min-height: 0; }
.sidebar {
  flex: none;
  width: 470px;
  overflow: hidden auto;
  scrollbar-width: none;
  background: #fff;
  box-shadow: 0 0 20px rgba(60, 80, 100, .14);
  z-index: 1;
}
.sidebar h2 { padding: 21px 20px 28px; font-size: 22px; font-weight: 600; line-height: 30px; color: #5588f8; }
.sidebar a { display: flex; align-items: center; height: 90px; padding: 0 51px 0 48px; font-size: 28px; color: #666; }
.sidebar a svg { width: 28px; height: 28px; margin-bottom: 4px; fill: none; stroke: #37474f; stroke-width: 1.5; }
.sidebar a span { flex: 1; margin-left: 24px; }
.sidebar a .plus { width: 18px; height: 18px; margin: 4px 0 0; stroke: #666; }
.sidebar hr { height: 2px; margin: 21px 46px 20px 48px; border: 0; background: #e3e8eb; }

/* content */
.content { flex: 1; min-width: 0; overflow: hidden auto; scrollbar-width: none; }
.banner { position: relative; height: 246px; padding: 66px 79px; color: #fff; }
.banner-art { position: absolute; inset: 0; width: 100%; height: 100%; }
.banner h1 { position: relative; font-size: 38px; font-weight: 600; line-height: 56px; }
.banner p { position: relative; margin-top: 16px; font-size: 25px; line-height: 36px; }

.page { padding: 78px; }
.card { border-radius: 10px; background: #fff; box-shadow: 0 0 34px rgba(60, 80, 100, .13); }
.notice { padding: 40px; margin-bottom: 60px; line-height: 42px; }
.columns { display: grid; grid-template-columns: 1fr 1fr; gap: 60px; }
.card-head { height: 170px; padding: 40px 0; box-shadow: 0 20px 40px -10px rgba(0, 0, 0, .06); }
.card-head h3 { padding-left: 32px; border-left: 8px solid #5588f8; font-size: 29px; font-weight: 600; line-height: 40px; color: #37474f; }
.card-head p { margin-top: 12px; padding-left: 40px; font-size: 25px; line-height: 36px; }

/* map */
.map { position: relative; height: 800px; margin: 40px; overflow: hidden; }
.ground { width: 100%; height: 100%; }
.zoom, .full { position: absolute; top: 20px; width: 80px; background: #fff; border-radius: 4px; box-shadow: 0 2px 8px rgba(0, 0, 0, .3); }
.zoom { left: 20px; }
.zoom button, .full { display: flex; align-items: center; justify-content: center; width: 80px; height: 80px; }
.zoom button + button { position: relative; height: 82px; }
.zoom button + button::before { content: ""; position: absolute; top: 0; left: 10px; right: 10px; height: 2px; background: #e6e6e6; }
.full { right: 20px; }
.zoom svg, .full svg { width: 36px; height: 36px; fill: #666; }

/* map ground */
.land { fill: #f0ede6; }
.green { fill: #cddcab; }
.urban { fill: #dedad5; }
.school { fill: #e6dcbe; }
.water { fill: #a0bcf8; }
.creek { fill: none; stroke: #94b3f8; stroke-width: 10; }
.trail { fill: none; stroke: #dde8c4; stroke-width: 3; }
.line { fill: none; stroke-linejoin: round; }
.round { stroke-linecap: round; }
.case-s { stroke: #d3ccc2; stroke-width: 10px; }
.fill-s { stroke: #f7f5f1; stroke-width: 7px; }
.case-m { stroke: #d6cfc6; stroke-width: 13px; }
.fill-m { stroke: #fff; stroke-width: 9px; }
.case-w { stroke: #d6cfc6; stroke-width: 20px; }
.fill-w { stroke: #fff; stroke-width: 16px; }
.case-x { stroke: #d4922f; stroke-width: 15px; }
.fill-x { stroke: #eda243; stroke-width: 11px; }
.case-t { stroke: #d4922f; stroke-width: 19px; }
.fill-t { stroke: #eda243; stroke-width: 15px; }
.ramp { fill: #fbdf9d; }
.rail { fill: none; stroke: #c3c3c3; stroke-width: 2; }
.line1 { fill: none; stroke: #1b4683; stroke-width: 6; }
.line7 { fill: none; stroke: #5c6526; stroke-width: 6; }

/* map labels */
.labels {
  font: 22px "Noto Sans CJK KR", sans-serif;
  fill: #3c3a38;
  text-anchor: middle;
  stroke: rgba(255, 255, 255, .75);
  stroke-width: 4px;
  stroke-linejoin: round;
  paint-order: stroke;
}
.labels .from { text-anchor: start; }
.labels .to { text-anchor: end; }
.labels .park { fill: #3d7428; }
.labels .food { fill: #8a4634; }
.labels .shop { fill: #35376b; }
.labels .metro { fill: #153e6a; }
.labels .civic { fill: #7f3530; }
.labels .dong { font-size: 24px; font-weight: 500; fill: #b3a684; }
.labels .dark { fill: #8b7c58; }
.mark { font: 30px "Liberation Sans", sans-serif; fill: #fff; fill-opacity: .5; }
```
